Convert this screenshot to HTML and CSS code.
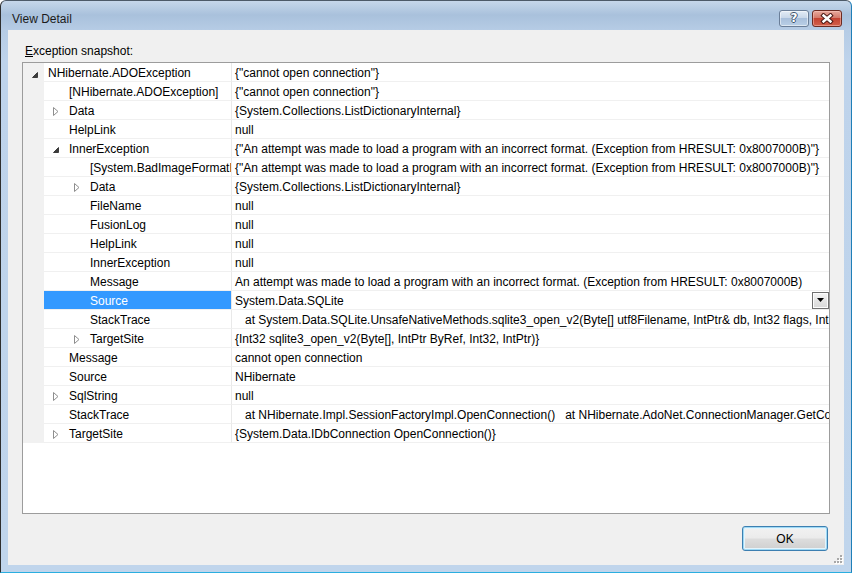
FILE: index.html
```html
<!DOCTYPE html>
<html>
<head>
<meta charset="utf-8">
<title>View Detail</title>
<link rel="stylesheet" href="styles.css">
</head>
<body>
<div class="window">
  <div class="titlebar">
    <span class="title">View Detail</span>
    <div class="caption-btns">
      <div class="cbtn help"><span class="q">?</span></div>
      <div class="cbtn close">
        <svg width="14" height="11" viewBox="0 0 14 11"><path d="M3.5 2.5 L10.5 8.5 M10.5 2.5 L3.5 8.5" stroke="#4a1814" stroke-width="4.4" stroke-linecap="square" fill="none"/><path d="M3.5 2.5 L10.5 8.5 M10.5 2.5 L3.5 8.5" stroke="#fff" stroke-width="2.4" stroke-linecap="square" fill="none"/></svg>
      </div>
    </div>
  </div>
  <div class="client">
    <div class="label"><u>E</u>xception snapshot:</div>
    <div class="tree">
      <div class="row">
        <div class="gutter"><svg class="ex" width="6" height="6" viewBox="0 0 6 6"><path d="M5.5 0.5V5.5H0.5Z" fill="#3c3c3c" stroke="#3c3c3c" stroke-width="1" stroke-linejoin="round"/></svg></div>
        <div class="name"><span class="txt">NHibernate.ADOException</span></div>
        <div class="val"><span class="vtext">{"cannot open connection"}</span></div>
      </div>
      <div class="row">
        <div class="gutter"></div>
        <div class="name"><span class="slot"></span><span class="txt">[NHibernate.ADOException]</span></div>
        <div class="val"><span class="vtext">{"cannot open connection"}</span></div>
      </div>
      <div class="row">
        <div class="gutter"></div>
        <div class="name"><span class="slot"><svg class="co" width="6" height="9" viewBox="0 0 6 9"><path d="M0.5 0.5L5 4.5L0.5 8.5Z" fill="#fff" stroke="#8e8e8e"/></svg></span><span class="txt">Data</span></div>
        <div class="val"><span class="vtext">{System.Collections.ListDictionaryInternal}</span></div>
      </div>
      <div class="row">
        <div class="gutter"></div>
        <div class="name"><span class="slot"></span><span class="txt">HelpLink</span></div>
        <div class="val"><span class="vtext">null</span></div>
      </div>
      <div class="row">
        <div class="gutter"></div>
        <div class="name"><span class="slot"><svg class="ex" width="6" height="6" viewBox="0 0 6 6"><path d="M5.5 0.5V5.5H0.5Z" fill="#3c3c3c" stroke="#3c3c3c" stroke-width="1" stroke-linejoin="round"/></svg></span><span class="txt">InnerException</span></div>
        <div class="val"><span class="vtext">{"An attempt was made to load a program with an incorrect format. (Exception from HRESULT: 0x8007000B)"}</span></div>
      </div>
      <div class="row">
        <div class="gutter"></div>
        <div class="name"><span class="slot"></span><span class="slot"></span><span class="txt">[System.BadImageFormatException]</span></div>
        <div class="val"><span class="vtext">{"An attempt was made to load a program with an incorrect format. (Exception from HRESULT: 0x8007000B)"}</span></div>
      </div>
      <div class="row">
        <div class="gutter"></div>
        <div class="name"><span class="slot"></span><span class="slot"><svg class="co" width="6" height="9" viewBox="0 0 6 9"><path d="M0.5 0.5L5 4.5L0.5 8.5Z" fill="#fff" stroke="#8e8e8e"/></svg></span><span class="txt">Data</span></div>
        <div class="val"><span class="vtext">{System.Collections.ListDictionaryInternal}</span></div>
      </div>
      <div class="row">
        <div class="gutter"></div>
        <div class="name"><span class="slot"></span><span class="slot"></span><span class="txt">FileName</span></div>
        <div class="val"><span class="vtext">null</span></div>
      </div>
      <div class="row">
        <div class="gutter"></div>
        <div class="name"><span class="slot"></span><span class="slot"></span><span class="txt">FusionLog</span></div>
        <div class="val"><span class="vtext">null</span></div>
      </div>
      <div class="row">
        <div class="gutter"></div>
        <div class="name"><span class="slot"></span><span class="slot"></span><span class="txt">HelpLink</span></div>
        <div class="val"><span class="vtext">null</span></div>
      </div>
      <div class="row">
        <div class="gutter"></div>
        <div class="name"><span class="slot"></span><span class="slot"></span><span class="txt">InnerException</span></div>
        <div class="val"><span class="vtext">null</span></div>
      </div>
      <div class="row">
        <div class="gutter"></div>
        <div class="name"><span class="slot"></span><span class="slot"></span><span class="txt">Message</span></div>
        <div class="val"><span class="vtext">An attempt was made to load a program with an incorrect format. (Exception from HRESULT: 0x8007000B)</span></div>
      </div>
      <div class="row sel">
        <div class="gutter"></div>
        <div class="name"><span class="slot"></span><span class="slot"></span><span class="txt">Source</span></div>
        <div class="val"><span class="vtext">System.Data.SQLite</span><span class="dd"><svg width="7" height="4" viewBox="0 0 7 4"><path d="M0 0H7L3.5 4Z" fill="#000"/></svg></span></div>
      </div>
      <div class="row">
        <div class="gutter"></div>
        <div class="name"><span class="slot"></span><span class="slot"></span><span class="txt">StackTrace</span></div>
        <div class="val"><span class="vtext">   at System.Data.SQLite.UnsafeNativeMethods.sqlite3_open_v2(Byte[] utf8Filename, IntPtr&amp; db, Int32 flags, IntPtr vfs)</span></div>
      </div>
      <div class="row">
        <div class="gutter"></div>
        <div class="name"><span class="slot"></span><span class="slot"><svg class="co" width="6" height="9" viewBox="0 0 6 9"><path d="M0.5 0.5L5 4.5L0.5 8.5Z" fill="#fff" stroke="#8e8e8e"/></svg></span><span class="txt">TargetSite</span></div>
        <div class="val"><span class="vtext">{Int32 sqlite3_open_v2(Byte[], IntPtr ByRef, Int32, IntPtr)}</span></div>
      </div>
      <div class="row">
        <div class="gutter"></div>
        <div class="name"><span class="slot"></span><span class="txt">Message</span></div>
        <div class="val"><span class="vtext">cannot open connection</span></div>
      </div>
      <div class="row">
        <div class="gutter"></div>
        <div class="name"><span class="slot"></span><span class="txt">Source</span></div>
        <div class="val"><span class="vtext">NHibernate</span></div>
      </div>
      <div class="row">
        <div class="gutter"></div>
        <div class="name"><span class="slot"><svg class="co" width="6" height="9" viewBox="0 0 6 9"><path d="M0.5 0.5L5 4.5L0.5 8.5Z" fill="#fff" stroke="#8e8e8e"/></svg></span><span class="txt">SqlString</span></div>
        <div class="val"><span class="vtext">null</span></div>
      </div>
      <div class="row">
        <div class="gutter"></div>
        <div class="name"><span class="slot"></span><span class="txt">StackTrace</span></div>
        <div class="val"><span class="vtext">   at NHibernate.Impl.SessionFactoryImpl.OpenConnection()   at NHibernate.AdoNet.ConnectionManager.GetConnection()</span></div>
      </div>
      <div class="row">
        <div class="gutter"></div>
        <div class="name"><span class="slot"><svg class="co" width="6" height="9" viewBox="0 0 6 9"><path d="M0.5 0.5L5 4.5L0.5 8.5Z" fill="#fff" stroke="#8e8e8e"/></svg></span><span class="txt">TargetSite</span></div>
        <div class="val"><span class="vtext">{System.Data.IDbConnection OpenConnection()}</span></div>
      </div>
    </div>
    <div class="footer"><button class="ok">OK</button></div>
    <svg class="grip" width="10" height="10" viewBox="0 0 10 10">
      <rect x="8" y="2" width="2" height="2" fill="#fff"/><rect x="7" y="1" width="2" height="2" fill="#a8a8a8"/>
      <rect x="8" y="5" width="2" height="2" fill="#fff"/><rect x="7" y="4" width="2" height="2" fill="#a8a8a8"/>
      <rect x="5" y="5" width="2" height="2" fill="#fff"/><rect x="4" y="4" width="2" height="2" fill="#a8a8a8"/>
      <rect x="8" y="8" width="2" height="2" fill="#fff"/><rect x="7" y="7" width="2" height="2" fill="#a8a8a8"/>
      <rect x="5" y="8" width="2" height="2" fill="#fff"/><rect x="4" y="7" width="2" height="2" fill="#a8a8a8"/>
      <rect x="2" y="8" width="2" height="2" fill="#fff"/><rect x="1" y="7" width="2" height="2" fill="#a8a8a8"/>
    </svg>
  </div>
</div>
</body>
</html>
```

FILE: styles.css
```css
html, body {
  margin: 0;
  padding: 0;
  background: #ffffff;
}

body {
  font-family: "Liberation Sans", Arial, sans-serif;
  font-size: 12px;
  color: #000;
}

.window {
  width: 852px;
  height: 573px;
  box-sizing: border-box;
  display: flex;
  flex-direction: column;
  border-top: 1px solid #4d5a68;
  border-left: 1px solid #2e2e2e;
  border-right: 1px solid #1f7fb8;
  border-bottom: 1px solid #2aaee0;
  border-radius: 6px 6px 0 0;
  background: linear-gradient(to bottom, #c6d7ea 0px, #a9c1dc 14px, #b6cce5 29px, #bed3eb 60px, #c0d5ec 100%);
}

.titlebar {
  height: 29px;
  flex: none;
  display: flex;
  align-items: flex-start;
  justify-content: space-between;
  padding: 0 9px 0 11px;
}

.title {
  margin-top: 11px;
  line-height: 15px;
  font-size: 12px;
  color: #1b1b1b;
}

.caption-btns {
  display: flex;
  gap: 3px;
  margin-top: 9px;
}

.cbtn {
  width: 30px;
  height: 17px;
  box-sizing: border-box;
  border-radius: 3px;
  display: flex;
  align-items: center;
  justify-content: center;
}

.help {
  border: 1px solid #6a7e98;
  background: linear-gradient(to bottom, #e3ecf6 0%, #c9d8ea 45%, #a9c0dc 50%, #b9cfe6 100%);
  box-shadow: inset 0 0 0 1px rgba(255,255,255,0.5);
}

.help .q {
  font-family: "DejaVu Sans", sans-serif;
  font-weight: bold;
  font-size: 12px;
  line-height: 13px;
  color: #fff;
  text-shadow: 1px 0 0 #3f536c, -1px 0 0 #3f536c, 0 1px 0 #3f536c, 0 -1px 0 #3f536c;
}

.close {
  border: 1px solid #6b2a22;
  background: linear-gradient(to bottom, #e8a99d 0%, #d47a6b 45%, #c44332 50%, #d2604b 100%);
  box-shadow: inset 0 0 0 1px rgba(255,210,200,0.45);
}

.client {
  flex: 1;
  margin: 0 7px 7px 7px;
  background: #f0f0f0;
  display: flex;
  flex-direction: column;
  padding: 12px 14px 14px 14px;
  position: relative;
}

.label {
  line-height: 18px;
  height: 18px;
  padding-left: 3px;
  margin-bottom: 2px;
}

.label u {
  text-decoration: underline;
}

.tree {
  height: 452px;
  flex: none;
  box-sizing: border-box;
  border: 1px solid #9c9c9c;
  background: #fff;
  overflow: hidden;
}

.row {
  display: flex;
  height: 19px;
}

.gutter {
  width: 21px;
  flex: none;
  background: #f1f1f1;
  display: flex;
  align-items: center;
  padding-left: 9px;
  box-sizing: border-box;
}

.name {
  width: 188px;
  flex: none;
  box-sizing: border-box;
  display: flex;
  align-items: center;
  border-bottom: 1px solid #f0f0f0;
  border-right: 1px solid #e9e9e9;
  white-space: nowrap;
  overflow: hidden;
}

.slot {
  width: 21px;
  flex: none;
  display: flex;
  align-items: center;
  padding-left: 9px;
  box-sizing: border-box;
  height: 18px;
}

.ex {
  margin-top: 4px;
}

.co {
  margin-top: 2px;
}

.txt {
  padding-left: 4px;
  padding-top: 2px;
  line-height: 16px;
}

.val {
  flex: 1;
  min-width: 0;
  box-sizing: border-box;
  border-bottom: 1px solid #f0f0f0;
  padding-left: 3px;
  white-space: pre;
  overflow: hidden;
  display: flex;
  align-items: center;
}

.vtext {
  flex: 1;
  padding-top: 2px;
  line-height: 16px;
}

.row.sel .name {
  background: #3399ff;
  color: #fff;
}

.dd {
  width: 17px;
  height: 17px;
  box-sizing: border-box;
  border: 1px solid #707070;
  background: linear-gradient(to bottom, #f4f4f4 0%, #e4e4e4 50%, #d8d8d8 100%);
  box-shadow: inset 0 0 0 1px #fcfcfc;
  display: flex;
  align-items: center;
  justify-content: center;
  flex: none;
}

.footer {
  display: flex;
  justify-content: flex-end;
  margin-top: 12px;
  padding-right: 2px;
}

.ok {
  width: 86px;
  height: 25px;
  box-sizing: border-box;
  border: 1px solid #3c7fb1;
  border-radius: 3px;
  background: linear-gradient(to bottom, #f2f2f2 0%, #ebebeb 48%, #dddddd 52%, #cfcfcf 100%);
  box-shadow: inset 0 0 0 1px #9fd9f4, inset 0 0 0 2px #e4f4fc;
  font-family: "Liberation Sans", Arial, sans-serif;
  font-size: 12px;
  color: #000;
  padding: 0;
}

.grip {
  position: absolute;
  right: 1px;
  bottom: 1px;
}
```
